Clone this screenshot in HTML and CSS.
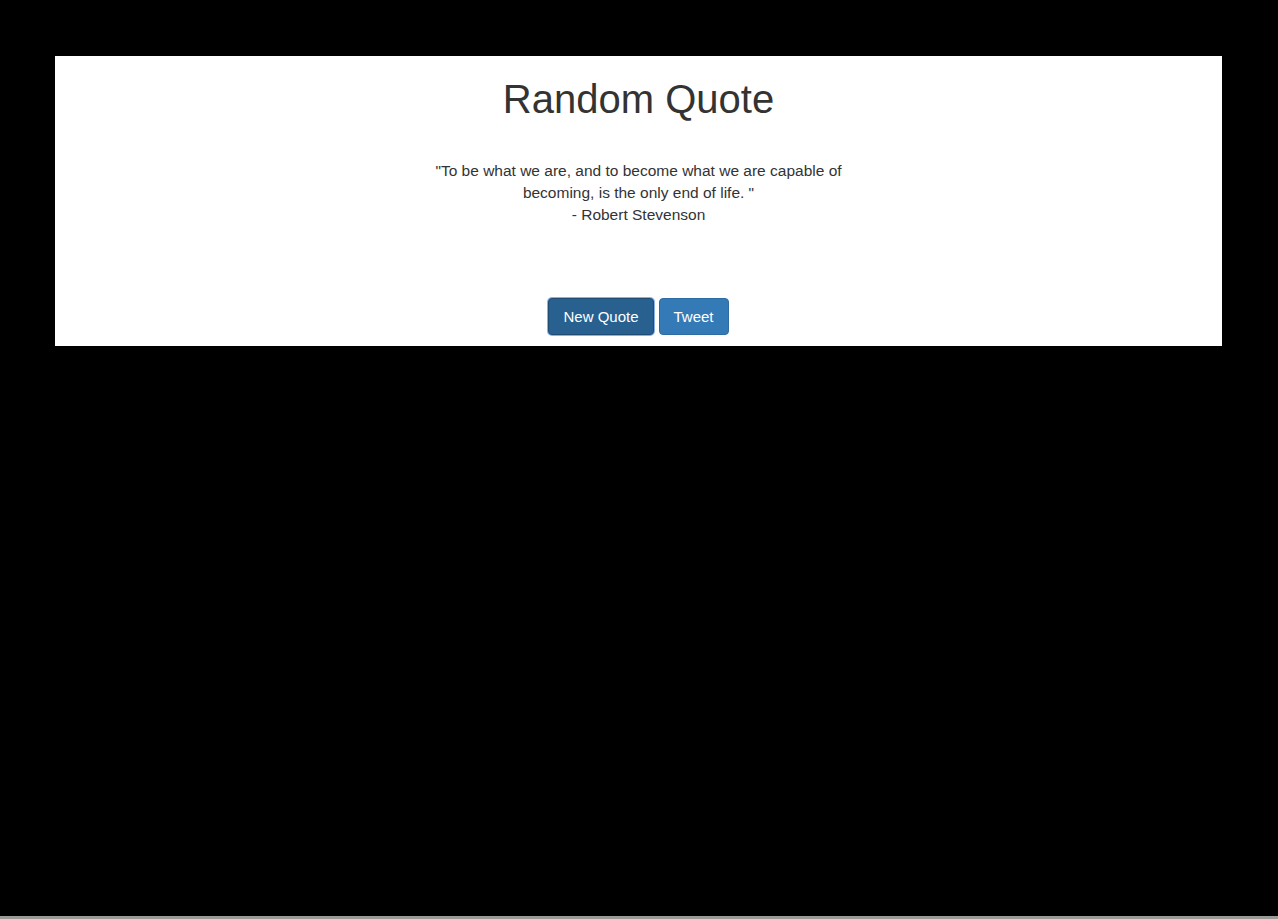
FILE: index.html
```html
<!DOCTYPE html>
<html>
<head>
<meta charset="utf-8">
<title>Random Quote</title>
<link rel="stylesheet" href="styles.css">
</head>
<body>
<main class="page">
  <section class="card">
    <h1 class="title">Random Quote</h1>
    <div class="quote">
      <p class="quote-text">"To be what we are, and to become what we are capable of becoming, is the only end of life. "</p>
      <p class="quote-author">- Robert Stevenson</p>
    </div>
    <div class="actions">
      <button class="btn btn-active">New Quote</button>
      <button class="btn">Tweet</button>
    </div>
  </section>
</main>
<div class="bottom-strip"></div>
</body>
</html>
```

FILE: styles.css
```css
* { box-sizing: border-box; }
html, body {
  margin: 0;
  padding: 0;
  height: 100%;
  background: #000;
  overflow: hidden;
}
body {
  font-family: "Liberation Sans", Arial, sans-serif;
  color: #333;
  display: flex;
  flex-direction: column;
}
.page {
  flex: 1;
  padding: 56px 56px 0 55px;
}
.card {
  background: #fff;
  height: 290px;
  display: flex;
  flex-direction: column;
  align-items: center;
}
.title {
  margin: 21px 0 0;
  font-size: 40px;
  font-weight: normal;
  line-height: 44px;
  color: #333;
}
.quote {
  margin-top: 39px;
  width: 430px;
  text-align: center;
  font-size: 15.5px;
  line-height: 22px;
}
.quote p { margin: 0; }
.actions {
  margin-top: 72px;
  display: flex;
  gap: 5px;
}
.btn {
  font-family: "Liberation Sans", Arial, sans-serif;
  font-size: 15px;
  line-height: 21px;
  padding: 7px 14px;
  color: #fff;
  background: #337ab7;
  border: 1px solid #2e6da4;
  border-radius: 4px;
}
.btn-active {
  background: #286090;
  border-color: #204d74;
  box-shadow: 0 0 0 1px #8ab0e8;
}
.bottom-strip {
  height: 3px;
  background: #9a9a96;
}
```
